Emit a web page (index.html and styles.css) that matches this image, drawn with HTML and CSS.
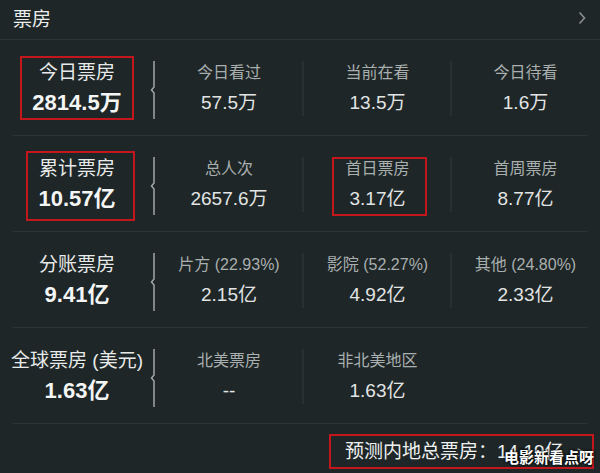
FILE: index.html
```html
<!DOCTYPE html>
<html lang="zh-CN">
<head>
    <meta charset="UTF-8">
    <meta name="viewport" content="width=device-width, initial-scale=1.0">
    <title>票房</title>
    <link rel="stylesheet" href="styles.css">
</head>
<body>
    <div class="board">
        <div class="head">
            <span class="title">票房</span>
            <svg class="chev" width="8" height="14" viewBox="0 0 8 14"><polyline points="1.5,1.5 6.5,7 1.5,12.5" fill="none" stroke="#8a9091" stroke-width="1.6"/></svg>
        </div>

        <!-- 今日 -->
        <div class="row">
            <div class="main mark mark-today">
                <div class="label">今日票房</div>
                <div class="value">2814.5万</div>
            </div>
            <svg class="brace" width="6" height="58" viewBox="0 0 6 58"><path d="M5 0 V26 L2.5 29 L5 32 V58" fill="none" stroke="#a2a7a8" stroke-width="1.5"/></svg>
            <div class="cols">
                <div class="col"><div class="stat"><div class="label">今日看过</div><div class="value">57.5万</div></div></div>
                <div class="col"><div class="stat"><div class="label">当前在看</div><div class="value">13.5万</div></div></div>
                <div class="col"><div class="stat"><div class="label">今日待看</div><div class="value">1.6万</div></div></div>
            </div>
        </div>
        <hr class="rule">

        <!-- 累计 -->
        <div class="row">
            <div class="main mark mark-total">
                <div class="label">累计票房</div>
                <div class="value">10.57亿</div>
            </div>
            <svg class="brace" width="6" height="58" viewBox="0 0 6 58"><path d="M5 0 V26 L2.5 29 L5 32 V58" fill="none" stroke="#a2a7a8" stroke-width="1.5"/></svg>
            <div class="cols">
                <div class="col"><div class="stat"><div class="label">总人次</div><div class="value">2657.6万</div></div></div>
                <div class="col mark mark-first"><div class="stat"><div class="label">首日票房</div><div class="value">3.17亿</div></div></div>
                <div class="col"><div class="stat"><div class="label">首周票房</div><div class="value">8.77亿</div></div></div>
            </div>
        </div>
        <hr class="rule">

        <!-- 分账 -->
        <div class="row">
            <div class="main">
                <div class="label">分账票房</div>
                <div class="value">9.41亿</div>
            </div>
            <svg class="brace" width="6" height="58" viewBox="0 0 6 58"><path d="M5 0 V26 L2.5 29 L5 32 V58" fill="none" stroke="#a2a7a8" stroke-width="1.5"/></svg>
            <div class="cols">
                <div class="col"><div class="stat"><div class="label">片方 (22.93%)</div><div class="value">2.15亿</div></div></div>
                <div class="col"><div class="stat"><div class="label">影院 (52.27%)</div><div class="value">4.92亿</div></div></div>
                <div class="col"><div class="stat"><div class="label">其他 (24.80%)</div><div class="value">2.33亿</div></div></div>
            </div>
        </div>
        <hr class="rule">

        <!-- 全球 -->
        <div class="row">
            <div class="main">
                <div class="label">全球票房 (美元)</div>
                <div class="value">1.63亿</div>
            </div>
            <svg class="brace" width="6" height="58" viewBox="0 0 6 58"><path d="M5 0 V26 L2.5 29 L5 32 V58" fill="none" stroke="#a2a7a8" stroke-width="1.5"/></svg>
            <div class="cols">
                <div class="col"><div class="stat"><div class="label">北美票房</div><div class="value">--</div></div></div>
                <div class="col"><div class="stat"><div class="label">非北美地区</div><div class="value">1.63亿</div></div></div>
            </div>
        </div>
        <hr class="rule">

        <div class="foot">
            <div class="forecast">预测内地总票房：14.19亿 <span class="arrow">&gt;</span></div>
            <span class="watermark">电影新看点呀</span>
        </div>
    </div>
</body>
</html>
```

FILE: styles.css
```css
html, body {
    margin: 0;
    padding: 0;
    background: #1e2627;
    overflow: hidden;
}
body {
    font-family: "Liberation Sans", "Noto Sans CJK SC", sans-serif;
    color: #e6e8e8;
}
.board {
    width: 600px;
    height: 473px;
}
.head {
    height: 40px;
    box-sizing: border-box;
    padding: 0 12px 5px 13px;
    display: flex;
    align-items: center;
    justify-content: space-between;
    border-bottom: 1px solid #2b3334;
}
.title {
    font-size: 19px;
    color: #eceeee;
}
.chev {
    margin-right: 2px;
    margin-top: 2px;
}
.row {
    display: flex;
    height: 95px;
}
.main {
    width: 149px;
    flex: none;
    box-sizing: border-box;
    padding: 21px 0 19px 5px;
    text-align: center;
    position: relative;
}
.main .label {
    font-size: 19px;
    line-height: 24px;
    color: #e8eaea;
}
.main .value {
    font-size: 22px;
    line-height: 26px;
    margin-top: 5px;
    font-weight: bold;
    color: #f4f5f5;
}
.brace {
    flex: none;
    margin-top: 21px;
}
.cols {
    display: flex;
    flex: none;
}
.col {
    width: 148px;
    padding: 21px 0 19px;
    text-align: center;
    position: relative;
}
.col + .col .stat {
    border-left: 2px solid #283031;
    margin-left: -1px;
}
.col .label {
    font-size: 16px;
    line-height: 24px;
    color: #a9afaf;
}
.col .value {
    font-size: 19px;
    line-height: 26px;
    margin-top: 5px;
    color: #e2e4e4;
}
.rule {
    margin: 0 12px;
    border: none;
    border-top: 1px solid #2b3334;
    height: 0;
}

/* red annotation boxes */
.mark::after {
    content: "";
    position: absolute;
    border: 2px solid #c3161d;
}
.mark-today::after { left: 20px; right: 15px; top: 16px; bottom: 15px; }
.mark-total::after { left: 26px; right: 14px; top: 15px; bottom: 10px; }
.mark-first::after { left: 29px; right: 24px; top: 21px; bottom: 15px; }

.foot {
    position: relative;
    display: flex;
    justify-content: flex-end;
    padding: 10px 6px 0 0;
}
.forecast {
    width: 265px;
    height: 35px;
    box-sizing: border-box;
    border: 2px solid #c3161d;
    padding-left: 14px;
    font-size: 19px;
    line-height: 31px;
    color: #eef0f0;
    white-space: nowrap;
}
.arrow {
    color: #9aa0a0;
    font-size: 16px;
    margin-left: 8px;
}
.watermark {
    position: absolute;
    right: 6px;
    top: 22px;
    font-size: 15px;
    font-weight: bold;
    color: #ffffff;
    text-shadow: 0 0 2px #000, 0 0 3px #000;
}
```
